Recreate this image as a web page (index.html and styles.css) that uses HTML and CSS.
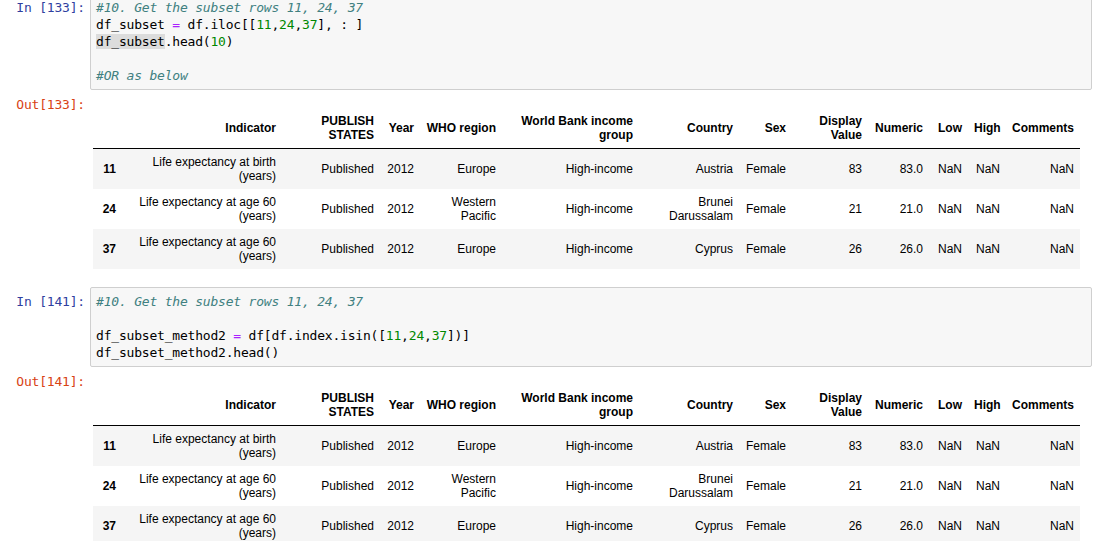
FILE: index.html
```html
<!DOCTYPE html>
<html lang="en">
<head>
<meta charset="utf-8">
<title>Notebook</title>
<link rel="stylesheet" href="styles.css">
</head>
<body>
<div class="nb">
  <div class="cell">
    <div class="row">
      <div class="prompt in">In [133]:</div>
      <div class="input-area"><pre class="code"><span class="cm">#10. Get the subset rows 11, 24, 37</span>
df_subset <span class="op">=</span> df.iloc[[<span class="nu">11</span>,<span class="nu">24</span>,<span class="nu">37</span>], : ]
<span class="hl">df_subset</span>.head(<span class="nu">10</span>)

<span class="cm">#OR as below</span></pre></div>
    </div>
    <div class="row out-row">
      <div class="prompt out">Out[133]:</div>
      <div class="out-sub">
        <table class="df">
          <colgroup>
            <col class="c-idx"><col class="c-ind"><col class="c-pub"><col class="c-year"><col class="c-who"><col class="c-wb"><col class="c-country"><col class="c-sex"><col class="c-disp"><col class="c-num"><col class="c-low"><col class="c-high"><col class="c-com">
          </colgroup>
          <thead>
            <tr><th></th><th>Indicator</th><th>PUBLISH STATES</th><th>Year</th><th>WHO region</th><th>World Bank income group</th><th>Country</th><th>Sex</th><th>Display Value</th><th>Numeric</th><th>Low</th><th>High</th><th>Comments</th></tr>
          </thead>
          <tbody>
            <tr><th>11</th><td>Life expectancy at birth (years)</td><td>Published</td><td>2012</td><td>Europe</td><td>High-income</td><td>Austria</td><td>Female</td><td>83</td><td>83.0</td><td>NaN</td><td>NaN</td><td>NaN</td></tr>
            <tr><th>24</th><td>Life expectancy at age 60 (years)</td><td>Published</td><td>2012</td><td>Western Pacific</td><td>High-income</td><td>Brunei Darussalam</td><td>Female</td><td>21</td><td>21.0</td><td>NaN</td><td>NaN</td><td>NaN</td></tr>
            <tr><th>37</th><td>Life expectancy at age 60 (years)</td><td>Published</td><td>2012</td><td>Europe</td><td>High-income</td><td>Cyprus</td><td>Female</td><td>26</td><td>26.0</td><td>NaN</td><td>NaN</td><td>NaN</td></tr>
          </tbody>
        </table>
      </div>
    </div>
  </div>

  <div class="cell">
    <div class="row">
      <div class="prompt in">In [141]:</div>
      <div class="input-area"><pre class="code"><span class="cm">#10. Get the subset rows 11, 24, 37</span>

df_subset_method2 <span class="op">=</span> df[df.index.isin([<span class="nu">11</span>,<span class="nu">24</span>,<span class="nu">37</span>])]
df_subset_method2.head()</pre></div>
    </div>
    <div class="row out-row">
      <div class="prompt out">Out[141]:</div>
      <div class="out-sub">
        <table class="df">
          <colgroup>
            <col class="c-idx"><col class="c-ind"><col class="c-pub"><col class="c-year"><col class="c-who"><col class="c-wb"><col class="c-country"><col class="c-sex"><col class="c-disp"><col class="c-num"><col class="c-low"><col class="c-high"><col class="c-com">
          </colgroup>
          <thead>
            <tr><th></th><th>Indicator</th><th>PUBLISH STATES</th><th>Year</th><th>WHO region</th><th>World Bank income group</th><th>Country</th><th>Sex</th><th>Display Value</th><th>Numeric</th><th>Low</th><th>High</th><th>Comments</th></tr>
          </thead>
          <tbody>
            <tr><th>11</th><td>Life expectancy at birth (years)</td><td>Published</td><td>2012</td><td>Europe</td><td>High-income</td><td>Austria</td><td>Female</td><td>83</td><td>83.0</td><td>NaN</td><td>NaN</td><td>NaN</td></tr>
            <tr><th>24</th><td>Life expectancy at age 60 (years)</td><td>Published</td><td>2012</td><td>Western Pacific</td><td>High-income</td><td>Brunei Darussalam</td><td>Female</td><td>21</td><td>21.0</td><td>NaN</td><td>NaN</td><td>NaN</td></tr>
            <tr><th>37</th><td>Life expectancy at age 60 (years)</td><td>Published</td><td>2012</td><td>Europe</td><td>High-income</td><td>Cyprus</td><td>Female</td><td>26</td><td>26.0</td><td>NaN</td><td>NaN</td><td>NaN</td></tr>
          </tbody>
        </table>
      </div>
    </div>
  </div>
</div>
</body>
</html>
```
FILE: styles.css
```css
html, body {
  margin: 0;
  padding: 0;
  background: #ffffff;
  font-family: "Liberation Sans", Arial, sans-serif;
  overflow: hidden;
}

.nb {
  padding-right: 21px;
  margin-top: -7px;
}

.cell + .cell {
  margin-top: 18px;
}

.row {
  display: flex;
  align-items: flex-start;
}

.prompt {
  flex: none;
  width: 90px;
  box-sizing: border-box;
  padding-right: 5px;
  text-align: right;
  font-family: "DejaVu Sans Mono", "Liberation Mono", monospace;
  font-size: 13px;
  line-height: 17px;
  letter-spacing: -0.2px;
  white-space: pre;
}

.prompt.in {
  color: #303f9f;
  padding-top: 6px;
}

.prompt.out {
  color: #d84315;
}

.input-area {
  flex: 1;
  min-width: 0;
  border: 1px solid #cfcfcf;
  border-radius: 2px;
  background: #f7f7f7;
  padding: 5px 5px;
}

.code {
  margin: 0;
  font-family: "DejaVu Sans Mono", "Liberation Mono", monospace;
  font-size: 13px;
  line-height: 17px;
  letter-spacing: -0.2px;
  color: #000000;
}

.code .cm {
  color: #408080;
  font-style: italic;
}

.code .op {
  color: #aa22ff;
}

.code .nu {
  color: #008800;
}

.code .hl {
  background: #dcdcdc;
}

.out-row {
  margin-top: 6px;
}

.out-sub {
  flex: 1;
  padding: 12px 0 0 3px;
}

.df {
  width: 987px;
  table-layout: fixed;
  border-collapse: collapse;
  border-spacing: 0;
  border: none;
  color: #000000;
  font-size: 12px;
}

.df thead {
  border-bottom: 1px solid #000000;
}

.df th,
.df td {
  text-align: right;
  vertical-align: middle;
  padding: 6px;
  line-height: 14px;
  border: none;
  font-weight: normal;
}

.df th {
  font-weight: bold;
}

.df tbody tr:nth-child(odd) {
  background: #f5f5f5;
}

.c-idx { width: 29px; }
.c-ind { width: 160px; }
.c-pub { width: 98px; }
.c-year { width: 40px; }
.c-who { width: 82px; }
.c-wb { width: 137px; }
.c-country { width: 100px; }
.c-sex { width: 53px; }
.c-disp { width: 76px; }
.c-num { width: 61px; }
.c-low { width: 39px; }
.c-high { width: 38px; }
.c-com { width: 74px; }
```
